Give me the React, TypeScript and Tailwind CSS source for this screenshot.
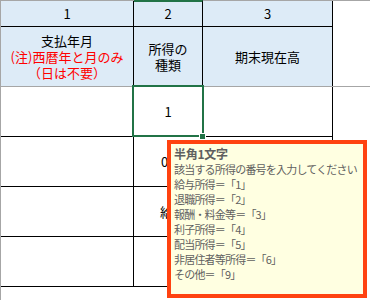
export default function App() {
  const hdr = "bg-[#ddebf7]";
  const tipLines = [
    "該当する所得の番号を入力してください",
    "給与所得＝「1」",
    "退職所得＝「2」",
    "報酬・料金等＝「3」",
    "利子所得＝「4」",
    "配当所得＝「5」",
    "非居住者等所得＝「6」",
    "その他＝「9」",
  ];

  return (
    <div className="relative w-[370px] h-[300px] overflow-hidden bg-white text-[13px] text-black font-['Noto_Sans_CJK_JP','Liberation_Sans',sans-serif]">
      <div className="border-l border-[#a6a6a6] h-full">
        {/* header row: column numbers */}
        <div className="grid grid-cols-[133px_69px_130px_1fr] h-[27px] border-t border-[#a6a6a6]">
          <div className={`${hdr} border-r border-b border-black flex items-center justify-center`}>1</div>
          <div className={`${hdr} border-r border-b border-black border-t-2 border-t-[#217346] -mt-px flex items-center justify-center`}>2</div>
          <div className={`${hdr} border-r border-b border-black flex items-center justify-center`}>3</div>
          <div />
        </div>

        {/* header row: titles */}
        <div className="grid grid-cols-[133px_69px_130px_1fr] h-[60px] border-b border-[#a6a6a6]">
          <div className={`${hdr} border-r border-black flex flex-col items-center justify-center leading-[16px]`}>
            <span>支払年月</span>
            <span className="text-[#ff0000]">(注)西暦年と月のみ</span>
            <span className="text-[#ff0000]">（日は不要）</span>
          </div>
          <div className={`${hdr} border-r border-black flex flex-col items-center justify-center leading-[16px]`}>
            <span>所得の</span>
            <span>種類</span>
          </div>
          <div className={`${hdr} border-r border-black flex items-center justify-center`}>期末現在高</div>
          <div />
        </div>

        {/* data rows */}
        <div className="grid grid-cols-[133px_69px_130px_1fr] h-[50px]">
          <div className="border-r border-b border-black" />
          <div className="border-r border-b border-black flex items-center justify-center">1</div>
          <div className="border-r border-b border-black" />
          <div />
        </div>
        <div className="grid grid-cols-[133px_69px_130px_1fr] h-[50px]">
          <div className="border-r border-b border-black" />
          <div className="border-r border-b border-black flex items-center pl-[27px] overflow-hidden whitespace-nowrap">01</div>
          <div className="border-r border-b border-black" />
          <div />
        </div>
        <div className="grid grid-cols-[133px_69px_130px_1fr] h-[50px]">
          <div className="border-r border-b border-black" />
          <div className="border-r border-b border-black flex items-center pl-[26px] overflow-hidden whitespace-nowrap">給与</div>
          <div className="border-r border-b border-black" />
          <div />
        </div>
        <div className="grid grid-cols-[133px_69px_130px_1fr] h-[50px]">
          <div className="border-r border-b border-black" />
          <div className="border-r border-b border-black" />
          <div className="border-r border-b border-black" />
          <div />
        </div>
      </div>

      {/* selected cell */}
      <div className="absolute left-[132px] top-[85px] w-[72px] h-[52px] border-2 border-[#217346]" />
      <div className="absolute left-[200px] top-[134px] w-[5px] h-[5px] bg-[#217346] border border-white box-content -ml-px -mt-px" />

      {/* input message tooltip */}
      <div className="absolute left-[167px] top-[140px] w-[200px] h-[158px] border-4 border-[#ff4210] bg-[#ffffe1] pl-[3px] pt-[2px] text-[11px] leading-[15px] tracking-[-0.8px] text-[#5f5f5f] whitespace-nowrap">
        <div className="font-bold text-[12px] mb-px tracking-[-0.3px]">半角1文字</div>
        {tipLines.map((l) => (
          <div key={l}>{l}</div>
        ))}
      </div>
    </div>
  );
}
